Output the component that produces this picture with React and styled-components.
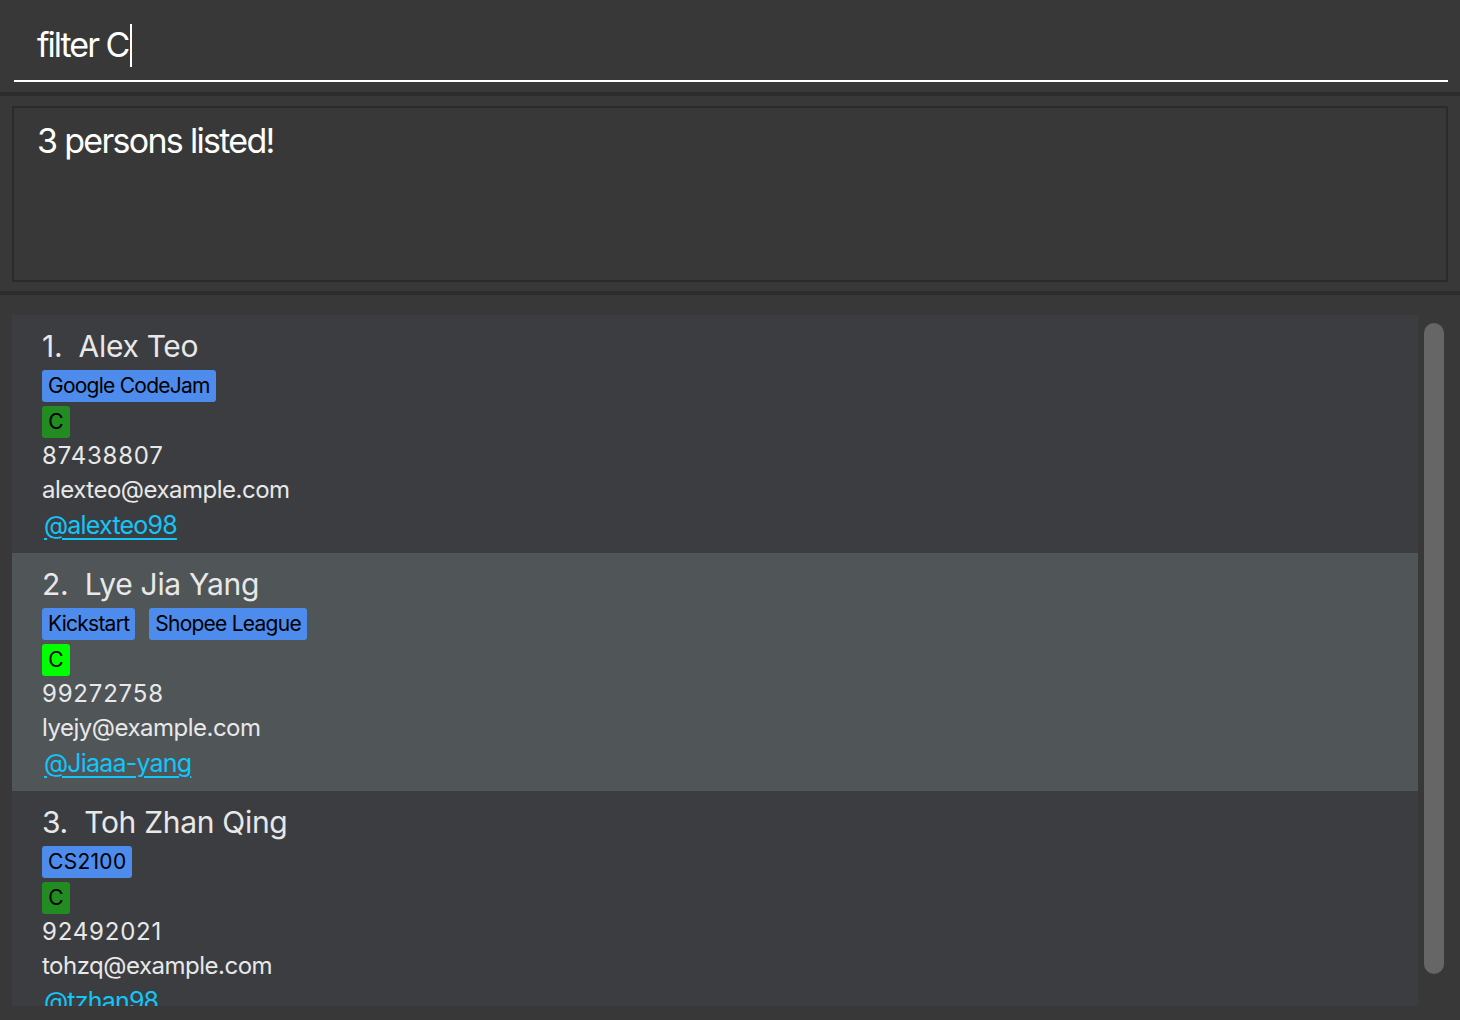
import styled, { createGlobalStyle } from "styled-components";

const persons = [
  {
    name: "Alex Teo",
    tags: ["Google CodeJam"],
    level: "dark",
    phone: "87438807",
    email: "alexteo@example.com",
    github: "@alexteo98",
  },
  {
    name: "Lye Jia Yang",
    tags: ["Kickstart", "Shopee League"],
    level: "bright",
    phone: "99272758",
    email: "lyejy@example.com",
    github: "@Jiaaa-yang",
  },
  {
    name: "Toh Zhan Qing",
    tags: ["CS2100"],
    level: "dark",
    phone: "92492021",
    email: "tohzq@example.com",
    github: "@tzhan98",
  },
];

const App = () => {
  return (
    <Window>
      <GlobalStyle />
      <CommandBox>
        <CommandInput>
          filter C<Caret />
        </CommandInput>
      </CommandBox>
      <Divider />
      <ResultPanel>
        <ResultBox>3 persons listed!</ResultBox>
      </ResultPanel>
      <Divider />
      <ListPanel>
        <List>
          {persons.map((p, i) => (
            <Card key={p.name} $odd={i % 2 === 1}>
              <Name>
                {i + 1}.{"  "}
                {p.name}
              </Name>
              <TagRow>
                {p.tags.map((t) => (
                  <Tag key={t} $digits={/\d/.test(t)}>
                    {t}
                  </Tag>
                ))}
              </TagRow>
              <LevelRow>
                <Level $bright={p.level === "bright"}>C</Level>
              </LevelRow>
              <Field $digits>{p.phone}</Field>
              <Field>{p.email}</Field>
              <Github>{p.github}</Github>
            </Card>
          ))}
        </List>
        <ScrollTrack>
          <Thumb />
        </ScrollTrack>
      </ListPanel>
    </Window>
  );
};

const GlobalStyle = createGlobalStyle`
  html, body {
    margin: 0;
    padding: 0;
    background: #383838;
  }
  * {
    box-sizing: border-box;
  }
`;

// LAYOUT
const Window = styled.div`
  width: 1460px;
  height: 1020px;
  overflow: hidden;
  display: flex;
  flex-direction: column;
  background: #383838;
  font-family: "Inter", "Noto Sans", sans-serif;
`;
const Divider = styled.div`
  height: 4px;
  background: #2c2c2c;
`;

// COMMAND BOX
const CommandBox = styled.div`
  height: 92px;
  padding: 0 12px 0 14px;
  display: flex;
`;
const CommandInput = styled.div`
  flex: 1;
  height: 82px;
  border-bottom: 2px solid #ffffff;
  padding: 22px 0 0 23px;
  color: #ffffff;
  font-size: 34px;
  letter-spacing: -2px;
  display: flex;
  align-items: flex-start;
  line-height: 46px;
`;
const Caret = styled.span`
  display: inline-block;
  width: 1.5px;
  height: 43px;
  margin-top: 2px;
  margin-left: 2px;
  background: #ffffff;
`;

// RESULT DISPLAY
const ResultPanel = styled.div`
  padding: 10px 12px 9px 12px;
`;
const ResultBox = styled.div`
  height: 176px;
  border: 2px solid #2b2b2b;
  padding: 11px 0 0 23px;
  color: #ffffff;
  font-size: 34px;
  letter-spacing: -1.7px;
  line-height: 44px;
`;

// PERSON LIST
const ListPanel = styled.div`
  flex: 1;
  display: flex;
  padding: 20px 0 14px 12px;
  min-height: 0;
`;
const List = styled.div`
  width: 1406px;
  overflow: hidden;
  display: flex;
  flex-direction: column;
`;
const Card = styled.div`
  flex-shrink: 0;
  height: 238px;
  padding: 12px 0 0 30px;
  background: ${(p) => (p.$odd ? "#505558" : "#3c3d40")};
  display: flex;
  flex-direction: column;
`;
const Name = styled.div`
  white-space: pre;
  color: #e8e8e8;
  font-size: 30px;
  letter-spacing: -0.3px;
  line-height: 38px;
  margin-bottom: 5px;
`;
const TagRow = styled.div`
  display: flex;
  gap: 14px;
  margin-bottom: 4px;
`;
const LevelRow = styled(TagRow)`
  margin-bottom: 1px;
`;
const Tag = styled.span`
  background: #4d8bec;
  color: #000000;
  border-radius: 3px;
  height: 32px;
  padding: 0 6px;
  font-size: 21px;
  line-height: 32px;
  letter-spacing: ${(p) => (p.$digits ? "0.3px" : "-0.75px")};
`;
const Level = styled(Tag)`
  width: 28px;
  padding: 0;
  text-align: center;
  letter-spacing: 0;
  background: ${(p) => (p.$bright ? "#00ff00" : "#228b22")};
`;
const Field = styled.div`
  color: #e8e8e8;
  font-size: 24px;
  line-height: 34px;
  letter-spacing: ${(p) => (p.$digits ? "0.8px" : "-0.5px")};
`;
const Github = styled.a`
  margin-top: 1px;
  margin-left: 2px;
  align-self: flex-start;
  color: #12c6f8;
  font-size: 25px;
  line-height: 34px;
  letter-spacing: -0.8px;
  text-decoration: underline;
  text-underline-offset: 4px;
  text-decoration-thickness: 2px;
`;

// SCROLLBAR
const ScrollTrack = styled.div`
  width: 42px;
  padding: 8px 0 0 6px;
`;
const Thumb = styled.div`
  width: 20px;
  height: 651px;
  border-radius: 10px;
  background: #666666;
`;

export default App;
